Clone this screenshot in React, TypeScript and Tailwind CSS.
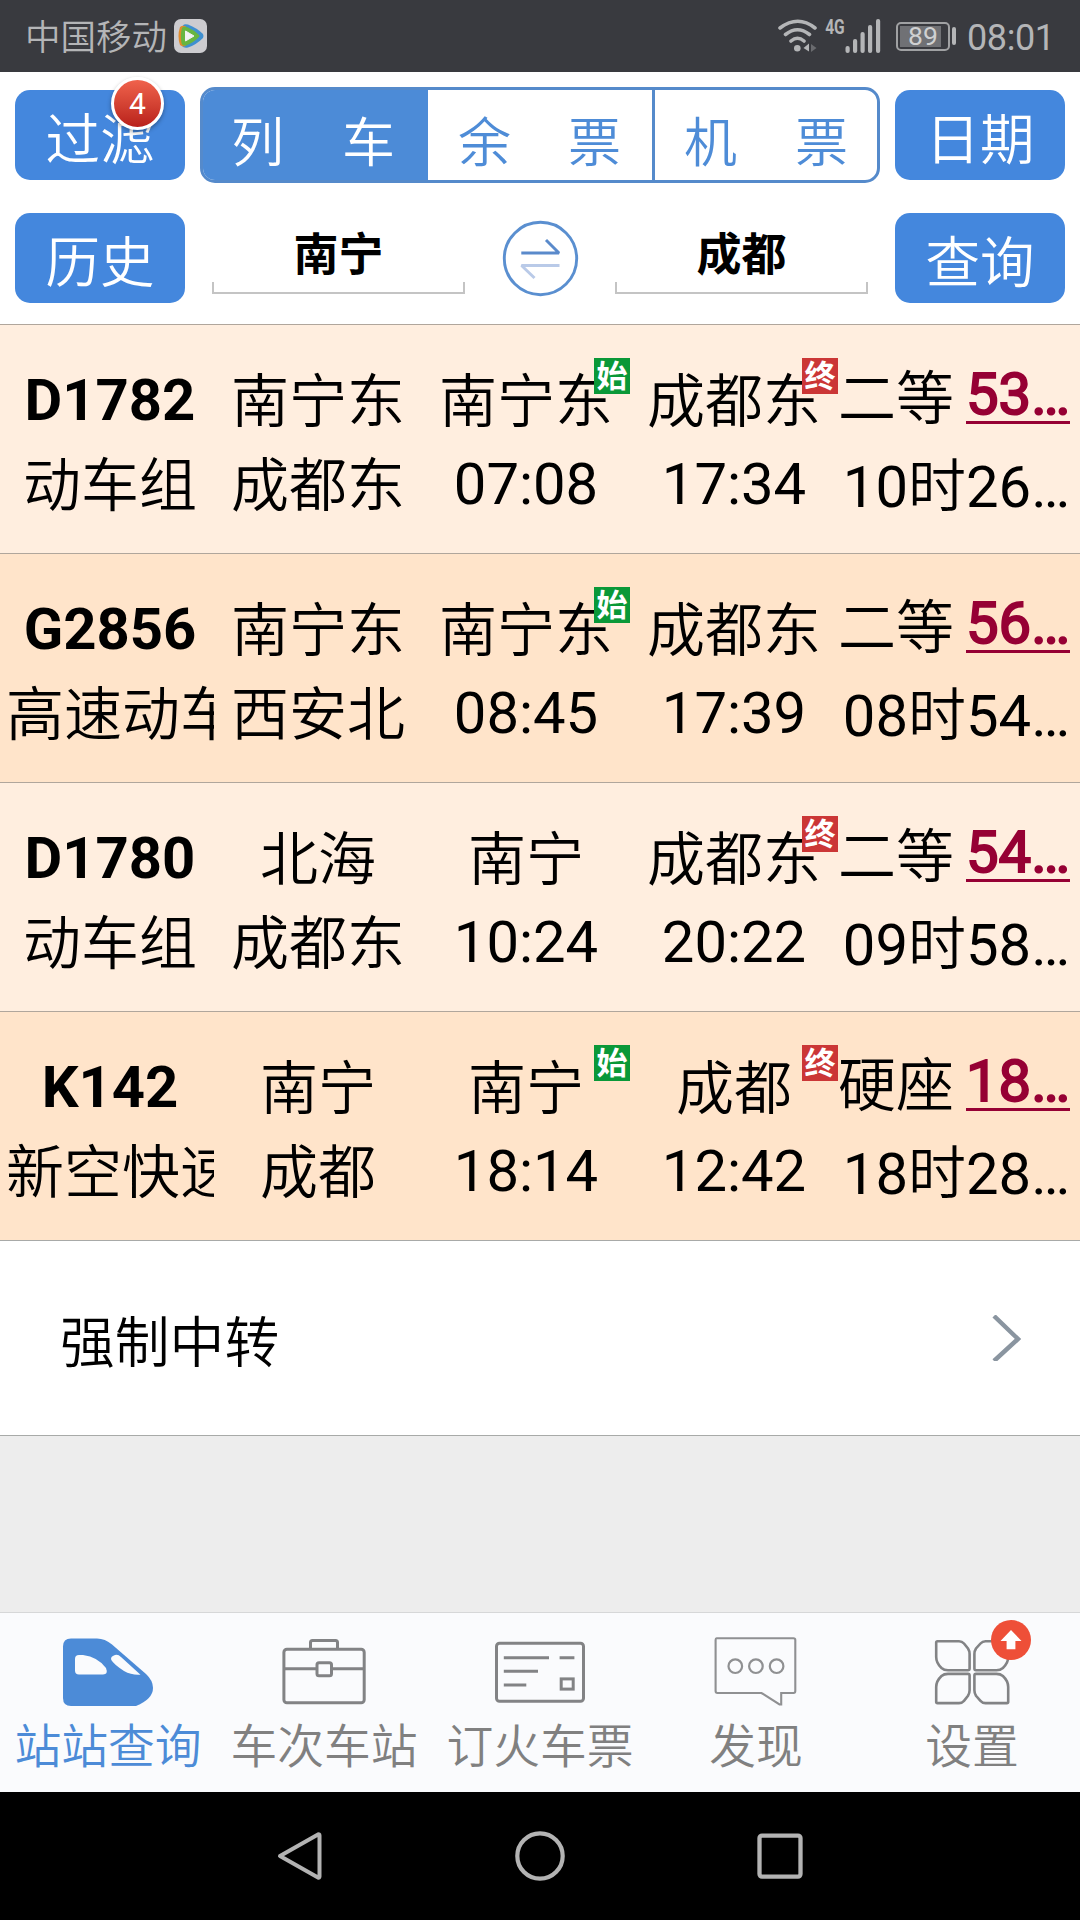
import React from "react";

type Train = {
  no: string;
  kind: string;
  from: string;
  to: string;
  dep: string;
  depTime: string;
  start?: boolean;
  arr: string;
  arrTime: string;
  end?: boolean;
  seat: string;
  price: string;
  span: string;
};

const trains: Train[] = [
  { no: "D1782", kind: "动车组", from: "南宁东", to: "成都东", dep: "南宁东", depTime: "07:08", start: true, arr: "成都东", arrTime: "17:34", end: true, seat: "二等", price: "53…", span: "10时26…" },
  { no: "G2856", kind: "高速动车", from: "南宁东", to: "西安北", dep: "南宁东", depTime: "08:45", start: true, arr: "成都东", arrTime: "17:39", seat: "二等", price: "56…", span: "08时54…" },
  { no: "D1780", kind: "动车组", from: "北海", to: "成都东", dep: "南宁", depTime: "10:24", arr: "成都东", arrTime: "20:22", end: true, seat: "二等", price: "54…", span: "09时58…" },
  { no: "K142", kind: "新空快速", from: "南宁", to: "成都", dep: "南宁", depTime: "18:14", start: true, arr: "成都", arrTime: "12:42", end: true, seat: "硬座", price: "18…", span: "18时28…" },
];

function StatusBar() {
  return (
    <header className="flex h-[72px] shrink-0 items-center bg-[#393a3f] text-[#b4b5b7]">
      <span className="ml-[25px] pt-[4px] text-[35.5px] leading-[78px] font-[350]">中国移动</span>
      <svg className="ml-[7px] h-[34px] w-[33px]" viewBox="0 0 33 34">
        <rect width="33" height="34" rx="7" fill="#cdccd0" />
        <path d="M9 6.500Q10 4.500 14 5.500Q23 9 29 15Q30 17 29 19Q22 26 14 28.500Q10 29.500 8 27Z" fill="#3f8fd0" />
        <path d="M6 8Q9 6 12 7.500L12 26.500Q9 28.500 6 26Q3 17 6 8Z" fill="#e08a2c" />
        <path d="M8 9Q9 7 13 8Q20 11 25 16Q26 17 25 18Q19 24 12 26.500Q8 27 7.500 24Q6 16 8 9Z" fill="#67b540" />
        <path d="M11.500 12L20 17L11.500 22Z" fill="#f1f1f1" stroke="#f1f1f1" strokeLinejoin="round" />
      </svg>
      <div className="flex-1" />
      <svg className="h-[34px] w-[42px]" viewBox="0 0 42 34" fill="none" stroke="#b4b5b7" strokeWidth="3.600" strokeLinecap="round">
        <path d="M3 9Q21 -4.500 38 9M8.500 15.500Q20.500 6 32.500 15.500M14 22Q20.500 16.500 27 22" />
        <circle cx="20.300" cy="29.300" r="3.300" fill="#b4b5b7" stroke="none" />
        <path d="M32 24.500V32.500L26.500 29Z" fill="#b4b5b7" stroke="none" />
        <path d="M34 25V33L39.500 29Z" fill="#6a6b6f" stroke="none" />
      </svg>
      <span className="flex w-[26px] justify-end self-start pt-[16px] font-['Roboto'] text-[20.5px] leading-[22px] font-bold">
        <span className="inline-block origin-right scale-x-[0.76]">4G</span>
      </span>
      <svg className="h-[34px] w-[36px]" viewBox="0 0 36 34" fill="#b4b5b7">
        <rect x="0.500" y="27" width="4.200" height="7" rx="2" />
        <rect x="8" y="20" width="4.200" height="14" rx="2" />
        <rect x="15.500" y="13" width="4.200" height="21" rx="2" />
        <rect x="23" y="6" width="4.200" height="28" rx="2" />
        <rect x="31" y="0" width="4.200" height="34" rx="2" />
      </svg>
      <div className="ml-[15px] flex h-[29px] w-[54px] items-center rounded-[5px] border-2 border-[#a0a1a3] p-[2px]">
        <div className="flex h-full w-[41px] items-center bg-[#707175] pt-px pl-[8px] font-['Roboto'] text-[26.5px] leading-none text-[#cfd0d1]">89</div>
      </div>
      <div className="ml-[2px] h-[18px] w-[4px] rounded-[2px] bg-[#b4b5b7]" />
      <span className="ml-[11px] w-[113px] pt-[3px] font-['Roboto'] text-[36px] leading-[72px] tracking-[-0.4px]">08:01</span>
    </header>
  );
}

function Button({ children }: { children: React.ReactNode }) {
  return (
    <button className="relative h-[90px] w-[170px] shrink-0 rounded-[15px] bg-[#4487dd] text-[54.5px] leading-[101px] font-[350] text-white">
      {children}
    </button>
  );
}

function Field({ children }: { children: React.ReactNode }) {
  return (
    <div className="flex h-[90px] w-[253px] flex-col items-center">
      <span className="h-[69px] text-[45px] leading-[85px] font-bold text-black">{children}</span>
      <div className="h-[12px] w-full border-2 border-t-0 border-[#c4c4c4]" />
    </div>
  );
}

function SearchPanel() {
  return (
    <section className="flex h-[252px] shrink-0 flex-col bg-white px-[15px]">
      <div className="flex h-[126px] items-center">
        <Button>
          过滤
          <span className="absolute top-[-13px] left-[96px] flex h-[53px] w-[53px] items-center justify-center rounded-full border-3 border-white bg-linear-to-b from-[#f0624c] to-[#b91f1a] font-['Roboto'] text-[30px] leading-none font-normal shadow-[0_2px_4px_rgba(0,0,0,0.35)]">4</span>
        </Button>
        <div className="ml-[15px] flex h-[96px] w-[680px] overflow-hidden rounded-[15px] border-3 border-[#558acb] text-[53px] leading-[108px] font-[350] text-[#4e8cd7]">
          <div className="flex w-[226px] gap-[58px] bg-[#4c8bd7] pl-[28px] text-white"><span>列</span><span>车</span></div>
          <div className="flex w-[225px] gap-[57px] pl-[30px]"><span>余</span><span>票</span></div>
          <div className="flex w-[226px] gap-[58px] border-l-3 border-[#558acb] pl-[29px]"><span>机</span><span>票</span></div>
        </div>
        <div className="ml-[15px]"><Button>日期</Button></div>
      </div>
      <div className="flex h-[120px] items-center">
        <Button>历史</Button>
        <div className="ml-[27px]"><Field>南宁</Field></div>
        <svg className="mr-[36px] ml-[37px] h-[77px] w-[77px]" viewBox="0 0 77 77" fill="none" strokeWidth="2.900">
          <circle cx="38.500" cy="38.500" r="36.200" stroke="#5a8fd0" />
          <path d="M32.500 58L19.500 45.500H57.500" stroke="#b9cae8" strokeLinejoin="bevel" />
          <path d="M44 20L57 33H19.300" stroke="#5a8acb" strokeLinejoin="bevel" />
        </svg>
        <Field>成都</Field>
        <div className="ml-[27px]"><Button>查询</Button></div>
      </div>
    </section>
  );
}

function Cell({ top, bottom, wide, badge, bold }: { top: string; bottom: string; wide?: boolean; badge?: "始" | "终"; bold?: boolean }) {
  return (
    <div className="relative flex w-[208px] flex-col overflow-hidden pt-[33px] whitespace-nowrap">
      <span className={bold ? "h-[84px] text-center font-bold" : "h-[84px] text-center leading-[89px] font-[350]"}>{top}</span>
      <span className={wide ? "h-[84px] text-left leading-[89px] font-[350]" : /\d/.test(bottom) ? "h-[84px] text-center" : "h-[84px] text-center leading-[89px] font-[350]"}>{bottom}</span>
      {badge && (
        <span className={badge === "始" ? "absolute top-[33px] right-0 h-[36px] w-[36px] bg-[#0a9838] text-center text-[31px] leading-[37px] font-bold text-white" : "absolute top-[33px] right-0 h-[36px] w-[36px] bg-[#cb3636] text-center text-[31px] leading-[37px] font-bold text-white"}>
          {badge}
        </span>
      )}
    </div>
  );
}

function TrainRow({ t, dark }: { t: Train; dark: boolean }) {
  return (
    <div className={dark ? "flex h-[229px] shrink-0 border-t border-[#b0a69c] bg-[#ffe4ca] pl-[6px]" : "flex h-[229px] shrink-0 border-t border-[#b0a69c] bg-[#ffeedf] pl-[6px]"}>
      <Cell top={t.no} bottom={t.kind} bold wide={t.kind.length > 3} />
      <Cell top={t.from} bottom={t.to} />
      <Cell top={t.dep} bottom={t.depTime} badge={t.start ? "始" : undefined} />
      <Cell top={t.arr} bottom={t.arrTime} badge={t.end ? "终" : undefined} />
      <div className="flex w-[232px] flex-col pt-[27px] whitespace-nowrap">
        <div className="flex h-[93px] justify-between">
          <span className="leading-[95px] font-[350]">{t.seat}</span>
          <span className="text-[#960034] underline decoration-3 underline-offset-[7px] [-webkit-text-stroke:2px_#960034]">{t.price}</span>
        </div>
        <span className="text-right">{t.span.slice(0, 2)}<span className="font-[350]">{t.span[2]}</span>{t.span.slice(3)}</span>
      </div>
    </div>
  );
}

function TabItem({ label, active, children }: { label: string; active?: boolean; children: React.ReactNode }) {
  return (
    <div className={active ? "flex w-[216px] flex-col items-center text-[#4c8bd7]" : "flex w-[216px] flex-col items-center text-[#808080]"}>
      <svg className="mt-[14px] h-[90px] w-[108px] overflow-visible" viewBox="0 0 108 90" fill="none" stroke="#828385" strokeWidth="3">{children}</svg>
      <span className="text-[46.8px] leading-[60px] font-[350] whitespace-nowrap">{label}</span>
    </div>
  );
}

function TabBar() {
  return (
    <nav className="flex h-[180px] shrink-0 border-t border-[#d6d7d8] bg-[#fafbfd]">
      <TabItem label="站站查询" active>
        <path d="M17 11.500H43Q51 11.500 58 17.500L92 47Q99 53.500 99 61Q99 72 82 79H17Q9 79 9 71V19.500Q9 11.500 17 11.500Z" fill="#4c8bd7" stroke="none" />
        <path d="M25 28H29Q44 30 52 41Q54.500 47.500 49 47.500H25Q21 47.500 21 43.500V32Q21 28 25 28Z" fill="#fafbfd" stroke="none" />
        <path d="M61 28Q64 27 67 30L86.500 47.700Q78 48.500 70 44Q60 37.500 57.300 33Q56 29.500 61 28Z" fill="#fafbfd" stroke="none" />
      </TabItem>
      <TabItem label="车次车站">
        <rect x="13.900" y="22.200" width="80.300" height="53.600" rx="3" />
        <path d="M40.500 22V15.500Q40.500 13.500 42.500 13.500H65.500Q67.500 13.500 67.500 15.500V22M14 41.700H46.500M61.500 41.700H94" />
        <rect x="47" y="35.800" width="14.500" height="13" rx="2" />
      </TabItem>
      <TabItem label="订火车票">
        <rect x="10.500" y="16.200" width="87" height="58" rx="3" />
        <path d="M17.800 30.700H63M73.600 30.700H88.400M17.800 44.300H52M17.800 58H40.300" />
        <rect x="75.200" y="51.900" width="12" height="10.200" />
      </TabItem>
      <TabItem label="发现">
        <path d="M14.500 11.300H91.500Q93.300 11.300 93.300 13V64Q93.300 66 91.500 66H79.200V77.500H77.500L59.500 66H15.500Q13.600 66 13.600 64V13Q13.600 11.300 14.500 11.300Z" strokeWidth="2.100" stroke="#8f9092" />
        <g strokeWidth="2.200" stroke="#8f9092">
          <circle cx="33.300" cy="39.200" r="6.800" />
          <circle cx="53.900" cy="39.200" r="6.800" />
          <circle cx="74.600" cy="39.200" r="6.800" />
        </g>
      </TabItem>
      <TabItem label="设置">
        <g strokeWidth="2.600">
          <path d="M19.500 14.200H41Q44 14.200 46 16.500L50 21.500Q51.600 24 51.600 27V41.500Q51.600 43.200 50 43.200H30Q26 43.200 23.500 41Q18.200 36 18.200 30V15.500Q18.200 14.200 19.500 14.200Z" />
          <path d="M88.900 14.200H67.500Q64.500 14.200 62.500 16.500L58 21.500Q56.400 24 56.400 27V41.500Q56.400 43.200 58 43.200H78.400Q82.400 43.200 84.900 41Q90.200 36 90.200 30V15.500Q90.200 14.200 88.900 14.200Z" />
          <path d="M19.500 76.100H41Q44 76.100 46 73.800L50 68.800Q51.600 66.300 51.600 63.300V48.500Q51.600 46.900 50 46.900H30Q26 46.900 23.500 49Q18.200 54 18.200 60V75Q18.200 76.100 19.500 76.100Z" />
          <path d="M88.900 76.100H67.500Q64.500 76.100 62.500 73.800L58 68.800Q56.400 66.300 56.400 63.300V48.500Q56.400 46.900 58 46.900H78.400Q82.400 46.900 84.900 49Q90.200 54 90.200 60V75Q90.200 76.100 88.900 76.100Z" />
        </g>
        <circle cx="93" cy="13" r="20" fill="#ee4f38" stroke="none" />
        <path d="M93 3L103.500 14H97.400V22.300H88.600V14H82.500Z" fill="#fff" stroke="none" />
      </TabItem>
    </nav>
  );
}

function SystemNav() {
  return (
    <footer className="flex h-[128px] shrink-0 items-center justify-center gap-[190px] bg-black">
      <svg className="h-[50px] w-[50px]" viewBox="0 0 50 50" fill="none" stroke="#b3b3b3" strokeWidth="4" strokeLinejoin="round">
        <path d="M5 25L43 3.500Q44.500 3 44.500 4.500V45.500Q44.500 47 43 46.500Z" />
      </svg>
      <svg className="h-[50px] w-[50px]" viewBox="0 0 50 50" fill="none" stroke="#b3b3b3" strokeWidth="4.200">
        <circle cx="25" cy="25" r="22.700" />
      </svg>
      <svg className="h-[50px] w-[50px]" viewBox="0 0 50 50" fill="none" stroke="#b3b3b3" strokeWidth="4.300">
        <rect x="4.500" y="4.600" width="41" height="41" rx="2.500" />
      </svg>
    </footer>
  );
}

export default function App() {
  return (
    <div className="flex h-[1920px] w-[1080px] flex-col overflow-hidden bg-[#ededed] font-['Roboto','Noto_Sans_CJK_SC',sans-serif] text-black">
      <StatusBar />
      <SearchPanel />
      <main className="flex flex-1 flex-col text-[58px] leading-[84px]">
        {trains.map((t, i) => (
          <TrainRow key={t.no} t={t} dark={i % 2 === 1} />
        ))}
        <div className="flex h-[196px] items-center justify-between border-y border-[#a8aaa8] bg-white pr-[59px] pl-[60px]">
          <span className="pt-[10px] text-[54.8px] font-[350]">强制中转</span>
          <svg className="h-[46px] w-[30px]" viewBox="0 0 30 46" fill="none" stroke="#8a95a0" strokeWidth="4.500">
            <path d="M3 1L27 24L3 46" />
          </svg>
        </div>
      </main>
      <TabBar />
      <SystemNav />
    </div>
  );
}
